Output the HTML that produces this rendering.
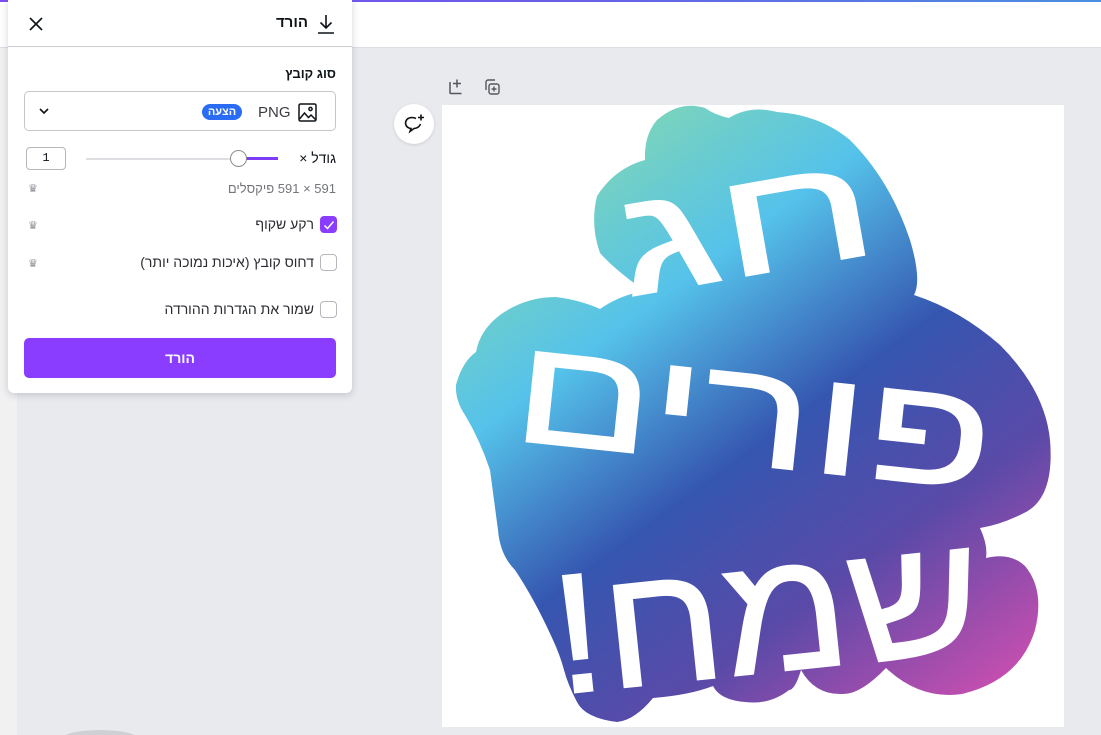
<!DOCTYPE html>
<html><head><meta charset="utf-8"><style>
*{box-sizing:border-box;margin:0;padding:0}
html{width:1101px;height:735px;overflow:hidden}
body{width:1101px;height:735px;overflow:hidden;position:relative;background:#e9eaee;font-family:"Liberation Sans","Noto Sans CJK SC",sans-serif;color:#0e1318}
.abs{position:absolute}
.topline{left:0;top:0;width:1101px;height:2px;background:linear-gradient(90deg,#7d4cf0,#6a5ee8 50%,#4a8ee0)}
.header{left:0;top:2px;width:1101px;height:46px;background:#fff;border-bottom:1px solid #dcdde3}
.leftstrip{left:0;top:48px;width:17px;height:687px;background:#f1f1f2}
.panel{left:8px;top:0;width:344px;height:393px;background:#fff;border-radius:0 0 6px 6px;box-shadow:0 2px 8px rgba(60,60,90,.22)}
.rt{direction:rtl;text-align:right}
.cb{width:17px;height:17px;border:1px solid #b5b7bd;border-radius:4px;background:#fff}
.crown{font-size:11px;color:#8e9096}
</style></head><body>
<div class="abs header"></div>
<div class="abs topline"></div>
<div class="abs leftstrip"></div>

<div class="abs" style="left:442px;top:105px;width:622px;height:622px;background:#fff"></div>
<svg class="abs" style="left:0;top:0" width="1101" height="735">
<defs><linearGradient id="g" x1="590" y1="130" x2="1010" y2="700" gradientUnits="userSpaceOnUse">
<stop offset="0" stop-color="#7fd6b6"/><stop offset="0.25" stop-color="#55c2ea"/><stop offset="0.5" stop-color="#3556b0"/><stop offset="0.72" stop-color="#5a4aa8"/><stop offset="1" stop-color="#d04fb0"/></linearGradient></defs>
<path fill="url(#g)" d="M657 120 Q680 100 705 108 Q715 115 729 118 Q750 105 777 112 Q820 115 850 140 Q890 180 910 240 Q922 280 914 295 Q960 310 1000 345 Q1045 390 1050 440 Q1055 500 1022 514 Q1000 525 980 528 Q988 545 986 558 Q1010 552 1025 566 Q1045 590 1035 630 Q1020 680 962 694 Q920 700 886 668 Q860 695 842 694 Q815 695 801 670 Q795 690 789 690 Q770 705 745 702 Q720 700 713 686 Q690 695 653 698 Q635 720 617 722 Q585 718 577 702 Q568 685 564 670 Q560 655 553 640 Q535 600 515 570 Q500 555 498 530 Q494 500 490 470 Q480 440 465 415 Q455 400 456 385 Q462 362 476 352 Q480 330 500 315 Q525 297 556 297 Q580 300 600 309 Q620 295 645 291 Q615 270 600 253 Q590 225 597 196 Q615 168 645 160 Q644 135 657 120 Z"/>
<g fill="#fff" stroke="#fff" stroke-width="2" font-family="'Liberation Sans','Noto Sans CJK SC',sans-serif" font-weight="normal" direction="rtl" text-anchor="middle">
<text x="745" y="275" font-size="150" textLength="260" lengthAdjust="spacingAndGlyphs" transform="rotate(-10 745 220)">חג</text>
<text x="755" y="465" font-size="150" textLength="480" lengthAdjust="spacingAndGlyphs" transform="rotate(6 755 400)">פורים</text>
<text x="765" y="672" font-size="170" textLength="430" lengthAdjust="spacingAndGlyphs" transform="rotate(-6 765 600)">שמח!</text>
</g>
</svg>

<svg class="abs" style="left:446px;top:77px" width="20" height="20" viewBox="0 0 20 20" fill="none" stroke="#55575c" stroke-width="1.5"><path d="M4 5v10.5a1 1 0 001 1h10.5M11 2.5v8M7 6.5h8"/></svg>
<svg class="abs" style="left:482px;top:77px" width="20" height="20" viewBox="0 0 20 20" fill="none" stroke="#55575c" stroke-width="1.4"><rect x="7" y="7" width="10" height="10" rx="2"/><path d="M4 13V5a2 2 0 012-2h7M12 9.5v5M9.5 12h5"/></svg>
<div class="abs" style="left:394px;top:104px;width:40px;height:40px;border-radius:50%;background:#fff;box-shadow:0 1px 3px rgba(0,0,0,.12)"></div>
<svg class="abs" style="left:402px;top:112px" width="24" height="24" viewBox="0 0 24 24" fill="none" stroke="#0e1318" stroke-width="1.6"><path d="M14 6.5Q12 5.5 10 5.5Q4 5.8 3.5 11Q4 16 9 16.5L8 19.5L12 16.5Q17 16 18.5 12M19 2.5v6M16 5.5h6"/></svg>
<div class="abs" style="left:60px;top:730px;width:80px;height:20px;border-radius:50%;background:#cfd0d4"></div>

<div class="abs panel">
 <div class="abs" style="left:0;top:46px;width:344px;height:1px;background:#cbcdd2"></div>
 <svg class="abs" style="left:20px;top:16px" width="16" height="16" viewBox="0 0 16 16" stroke="#0e1318" stroke-width="1.6"><path d="M2 2l12 12M14 2L2 14"/></svg>
 <div class="abs rt" style="right:44px;top:14px;font-size:15px;font-weight:bold">הורד</div>
 <svg class="abs" style="left:308px;top:13px" width="20" height="22" viewBox="0 0 20 22" fill="none" stroke="#0e1318" stroke-width="1.6"><path d="M10 2v13M4.5 9.5L10 15l5.5-5.5M2 20h16"/></svg>
 <div class="abs rt" style="right:16px;top:66px;font-size:13px;font-weight:bold">סוג קובץ</div>
 <div class="abs" style="left:16px;top:91px;width:312px;height:40px;border:1px solid #c4c6cc;border-radius:5px"></div>
 <svg class="abs" style="left:290px;top:103px" width="19" height="19" viewBox="0 0 19 19" fill="none" stroke="#0e1318" stroke-width="1.5"><rect x="1" y="1" width="17" height="17" rx="1.5"/><circle cx="12.5" cy="6" r="1.6"/><path d="M1.5 16l5-6 4 4.5 2.5-2.5 4.5 4.5"/></svg>
 <div class="abs" style="left:250px;top:104px;font-size:15px;color:#3a3c42">PNG</div>
 <div class="abs" style="left:194px;top:104px;width:40px;height:16px;border-radius:8px;background:#2b6cf5;color:#fff;font-size:11px;font-weight:bold;text-align:center;line-height:16px">הצעה</div>
 <svg class="abs" style="left:30px;top:106px" width="12" height="10" viewBox="0 0 12 10" fill="none" stroke="#0e1318" stroke-width="1.6"><path d="M2 3l4 4 4-4"/></svg>
 <div class="abs rt" style="right:16px;top:150px;font-size:14px;color:#0e1318">גודל ×</div>
 <div class="abs" style="left:78px;top:158px;width:152px;height:2px;background:#dcdee2"></div>
 <div class="abs" style="left:230px;top:157px;width:40px;height:3px;background:#7d3cf5"></div>
 <div class="abs" style="left:222px;top:150px;width:17px;height:17px;border-radius:50%;background:#fff;border:1px solid #8b8d92"></div>
 <div class="abs" style="left:18px;top:147px;width:40px;height:23px;border:1px solid #b5b7bd;border-radius:4px;font-size:12px;text-align:center;line-height:21px;font-family:'Liberation Mono',monospace">1</div>
 <div class="abs rt" style="right:16px;top:181px;font-size:13px;color:#74767c">591 × 591 פיקסלים</div>
 <div class="abs crown" style="left:20px;top:182px">♛</div>
 <div class="abs cb" style="left:312px;top:216px;background:#8b3dff;border-color:#8b3dff"></div>
 <svg class="abs" style="left:315px;top:219px" width="12" height="12" viewBox="0 0 12 12" fill="none" stroke="#fff" stroke-width="1.5"><path d="M1.5 6.5l3 3 6-7"/></svg>
 <div class="abs rt" style="right:38px;top:216px;font-size:14px;color:#2a2c32">רקע שקוף</div>
 <div class="abs crown" style="left:20px;top:219px">♛</div>
 <div class="abs cb" style="left:312px;top:254px"></div>
 <div class="abs rt" style="right:38px;top:254px;font-size:14px;color:#2a2c32">דחוס קובץ (איכות נמוכה יותר)</div>
 <div class="abs crown" style="left:20px;top:257px">♛</div>
 <div class="abs cb" style="left:312px;top:301px"></div>
 <div class="abs rt" style="right:38px;top:301px;font-size:14px;color:#2a2c32">שמור את הגדרות ההורדה</div>
 <div class="abs" style="left:16px;top:338px;width:312px;height:40px;border-radius:5px;background:#8b3dff;color:#fff;font-weight:bold;font-size:14px;text-align:center;line-height:40px">הורד</div>
</div>
</body></html>
